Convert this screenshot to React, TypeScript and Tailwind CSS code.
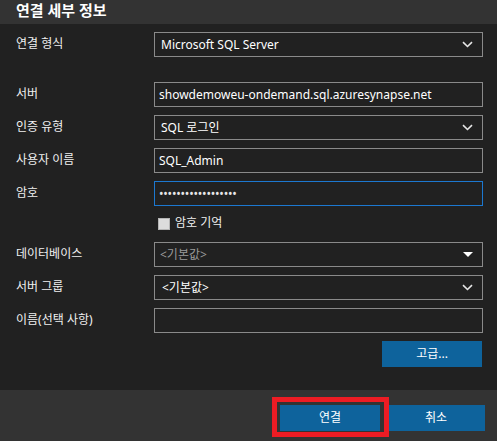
const Chevron = () => (
  <svg width="11" height="7" viewBox="0 0 11 7" className="shrink-0">
    <path d="M1 1.2 L5.5 5.5 L10 1.2" fill="none" stroke="#e6e6e6" strokeWidth="1.6" />
  </svg>
);

const Caret = () => (
  <svg width="10" height="6" viewBox="0 0 10 6" className="shrink-0">
    <path d="M0 0 H10 L5 5 Z" fill="#ffffff" />
  </svg>
);

const Row = ({ label, children }: { label: string; children: React.ReactNode }) => (
  <div className="flex items-center h-[25px]">
    <div className="w-[154px] pl-4 text-[12px] text-[#f0f0f0] -mt-[2px]">{label}</div>
    {children}
  </div>
);

const Box = ({
  children,
  focus = false,
  className = "",
}: {
  children?: React.ReactNode;
  focus?: boolean;
  className?: string;
}) => (
  <div
    className={`flex items-center h-[25px] w-[329px] border bg-[#212121] ${
      focus ? "border-[#1c78d0]" : "border-[#8a8a8a]"
    } ${className}`}
  >
    {children}
  </div>
);

const App = () => (
  <div
    className="relative w-[497px] h-[441px] flex flex-col bg-[#212121] text-white overflow-hidden"
    style={{ fontFamily: '"Noto Sans", "Noto Sans CJK KR", sans-serif' }}
  >
    <div className="h-[24px] bg-[#333333] pl-4 flex items-center">
      <span className="text-[15px] font-bold text-white -mt-[3px]">연결 세부 정보</span>
    </div>

    <div className="flex-1 flex flex-col pt-2">
      <Row label="연결 형식">
        <Box className="pl-[6px] pr-[9px] justify-between">
          <span className="text-[12px]">Microsoft SQL Server</span>
          <Chevron />
        </Box>
      </Row>

      <div className="mt-[25px] flex flex-col gap-2">
        <Row label="서버">
          <Box className="pl-[4px]">
            <span className="text-[12px]">showdemoweu-ondemand.sql.azuresynapse.net</span>
          </Box>
        </Row>
        <Row label="인증 유형">
          <Box className="pl-[6px] pr-[9px] justify-between">
            <span className="text-[12px]">SQL 로그인</span>
            <Chevron />
          </Box>
        </Row>
        <Row label="사용자 이름">
          <Box className="pl-[4px]">
            <span className="text-[12px]">SQL_Admin</span>
          </Box>
        </Row>
        <Row label="암호">
          <Box focus className="pl-[4px]">
            <span className="text-[12px] tracking-[-0.2px] text-[#e8e8e8]">
              ••••••••••••••••••
            </span>
          </Box>
        </Row>
      </div>

      <div className="flex items-center h-[12px] mt-[12px] pl-[158px] gap-[5px]">
        <div className="w-[12px] h-[12px] bg-[#dcdcdc] border border-[#b5b5b5]" />
        <span className="text-[12px] text-[#f0f0f0] -mt-[2px]">암호 기억</span>
      </div>

      <div className="mt-[12px] flex flex-col gap-2">
        <Row label="데이터베이스">
          <Box className="pl-[5px] pr-[9px] justify-between">
            <span className="text-[12px] text-[#9a9a9a]">&lt;기본값&gt;</span>
            <Caret />
          </Box>
        </Row>
        <Row label="서버 그룹">
          <Box className="pl-[7px] pr-[9px] justify-between">
            <span className="text-[12px]">&lt;기본값&gt;</span>
            <Chevron />
          </Box>
        </Row>
        <Row label="이름(선택 사항)">
          <Box />
        </Row>
      </div>

      <div className="flex justify-end pr-[15px] mt-[8px]">
        <button className="w-[100px] h-[26px] bg-[#0e639c] text-[12px] text-white">고급...</button>
      </div>
    </div>

    <div className="h-[51px] bg-[#333333] flex justify-end items-start pt-[15px] pr-[12px] gap-[7px]">
      <button className="w-[100px] h-[26px] bg-[#0e639c] text-[12px] text-white">연결</button>
      <button className="w-[98px] h-[26px] bg-[#0e639c] text-[12px] text-white">취소</button>
    </div>

    <div className="absolute left-[272px] top-[397px] w-[117px] h-[40px] border-[5px] border-[#ed1c24]" />
  </div>
);

export default App;
